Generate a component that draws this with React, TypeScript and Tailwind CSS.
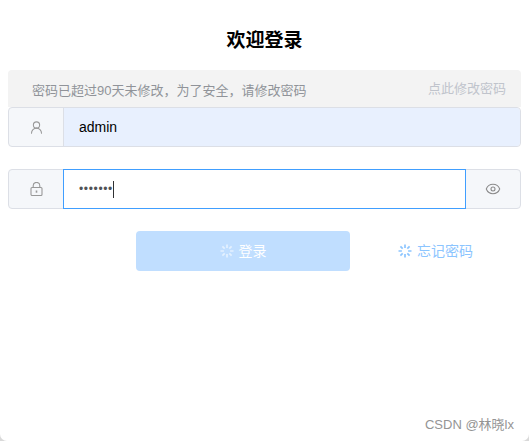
import React from 'react';
import { Eye, UserRound } from 'lucide-react';

const Spinner = ({ color }: { color: string }) => (
  <svg width="14" height="14" viewBox="0 0 14 14" stroke={color} strokeWidth="1.7" fill="none">
    <path d="M7 .5v3.4M7 10.1v3.4M.5 7h3.4M10.1 7h3.4M2.4 2.4l2.3 2.3M9.3 9.3l2.3 2.3M2.4 11.6l2.3-2.3M9.3 4.7l2.3-2.3" />
  </svg>
);

const LockIcon = () => (
  <svg width="13" height="14" viewBox="0 0 13 14" fill="none" stroke="#999999" strokeWidth="1.1">
    <rect x="1" y="5.5" width="11" height="8" rx="1" />
    <path d="M3.2 5.5V3.7a3.3 3.3 0 0 1 6.6 0v1.8" />
    <path d="M6.5 8.5v2.2" strokeWidth="1.6" />
  </svg>
);

export default function App() {
  return (
    <div className="h-[441px] w-[529px] bg-[#d9d9d9]">
      <div
        className="relative h-full overflow-hidden rounded-b-[7px] bg-white px-2 text-[14px]"
        style={{ fontFamily: '"Liberation Sans", "Noto Sans CJK SC", sans-serif' }}
      >
        <h1 className="h-[70px] pt-[28px] text-center text-[19px] leading-[26px] font-bold text-black">欢迎登录</h1>

        {/* Password expiry notice */}
        <div className="flex h-[37px] items-center justify-between rounded-t bg-[#f3f3f3] pl-6 pr-[15px]">
          <span className="pt-[4px] text-[13px] text-[#909399]">密码已超过90天未修改，为了安全，请修改密码</span>
          <span className="text-[13px] text-[#c0c4cc]">点此修改密码</span>
        </div>

        {/* Username */}
        <div className="flex h-10 rounded border border-[#dcdfe6] bg-[#f5f7fa]">
          <div className="flex w-[55px] items-center justify-center border-r border-[#dcdfe6]">
            <UserRound size={15} color="#999999" strokeWidth={1.7} />
          </div>
          <div className="flex flex-1 items-center rounded-r bg-[#e8f0fe] pl-[15px] text-black">admin</div>
        </div>

        {/* Password */}
        <div className="mt-[22px] flex h-10 rounded border border-[#dcdfe6] bg-[#f5f7fa]">
          <div className="flex w-[54px] items-center justify-center">
            <LockIcon />
          </div>
          <div className="-my-px flex flex-1 items-center border border-[#409eff] bg-white pl-[15px]">
            <span className="text-[12px] leading-none tracking-[.65px] text-[#505256]">•••••••</span>
            <span className="h-[17px] w-px bg-[#303133]" />
          </div>
          <div className="flex w-[54px] items-center justify-center">
            <Eye size={16} color="#8a8a8a" strokeWidth={1.6} />
          </div>
        </div>

        {/* Actions */}
        <div className="mt-[22px] flex h-10 items-center pl-[128px]">
          <button className="flex h-10 w-[214px] items-center justify-center gap-[5px] rounded bg-[#c0deff] text-white">
            <Spinner color="#e4f1ff" />
            登录
          </button>
          <button className="ml-12 flex items-center gap-[5px] text-[#8cc5ff]">
            <Spinner color="#8cc5ff" />
            忘记密码
          </button>
        </div>

        <span className="absolute right-[15px] bottom-[7px] text-[13px] text-[#949494]">CSDN @林晓lx</span>
      </div>
    </div>
  );
}
